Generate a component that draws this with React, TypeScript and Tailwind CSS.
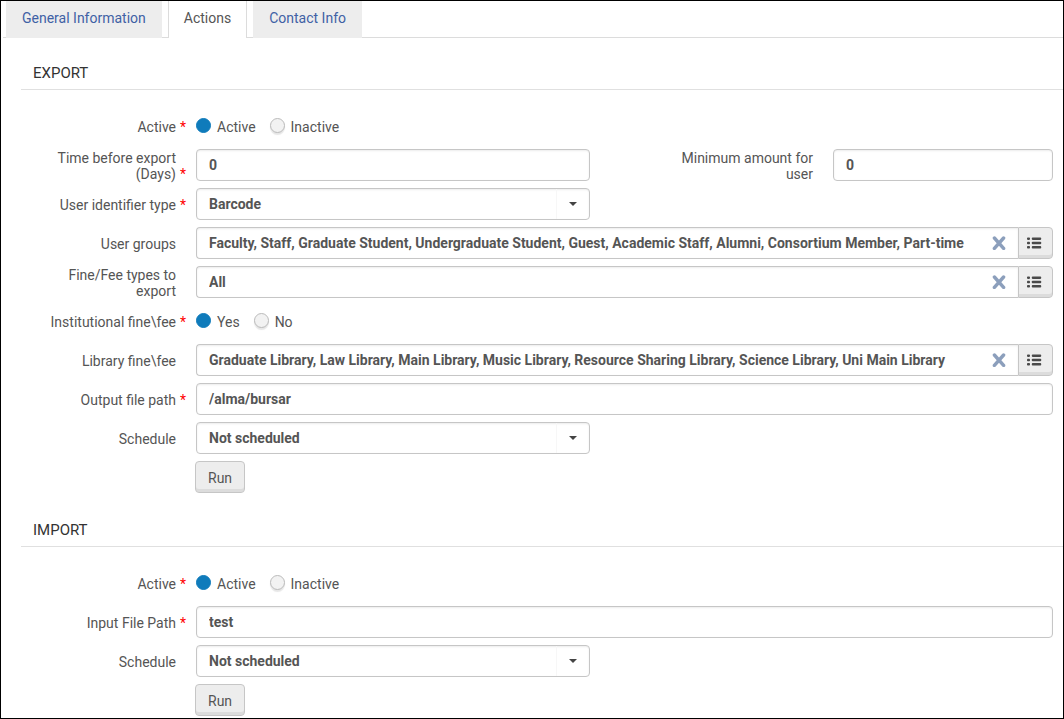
import React, { useState } from 'react';

const fieldClass =
  'block h-8 rounded border border-[#c6c6c6] bg-white px-3 text-sm font-bold text-[#555] shadow-[inset_0_1px_2px_rgba(0,0,0,0.08)] outline-none focus:border-[#0f7bbb]';

const buttonClass =
  'border border-[#c6c6c6] bg-[#ededed] text-sm text-[#555] shadow-[inset_0_-3px_0_#dcdcdc] hover:bg-[#e4e4e4]';

const tabs = ['General Information', 'Actions', 'Contact Info'];

function Label({ text, htmlFor, required }: { text: string; htmlFor?: string; required?: boolean }) {
  return (
    <div className="flex shrink-0 items-end pt-0.5 text-right text-sm leading-4 text-[#555]">
      <label htmlFor={htmlFor} className="w-[132px]">{text}</label>
      <span className="w-5 pl-1 text-left text-[#f00]">{required ? '*' : ''}</span>
    </div>
  );
}

function Row({ children }: { children: React.ReactNode }) {
  return <div className="flex h-8 items-center">{children}</div>;
}

function TextRow({ id, label, value, required }: { id: string; label: string; value: string; required?: boolean }) {
  return (
    <Row>
      <Label text={label} htmlFor={id} required={required} />
      <input id={id} type="text" defaultValue={value} className={`${fieldClass} min-w-0 flex-1`} />
    </Row>
  );
}

function RadioRow({ name, label, options }: { name: string; label: string; options: string[] }) {
  const [selected, setSelected] = useState(options[0]);

  return (
    <div role="radiogroup" aria-label={label}>
      <Row>
        <Label text={label} required />
        <div className="flex gap-3.5">
          {options.map((option) => (
            <label key={option} className="flex items-start gap-1.5 text-sm leading-4 text-[#555]">
              <input
                type="radio"
                name={name}
                checked={selected === option}
                onChange={() => setSelected(option)}
                className="size-[15px] appearance-none rounded-full border border-[#bbb] bg-[#f2f2f2] shadow-[0_2px_1px_rgba(0,0,0,0.1)] checked:border-[#0f7bbb] checked:bg-[#0f7bbb] checked:shadow-none"
              />
              <span className="pt-px">{option}</span>
            </label>
          ))}
        </div>
      </Row>
    </div>
  );
}

function SelectRow({ id, label, options, required }: { id: string; label: string; options: string[]; required?: boolean }) {
  return (
    <Row>
      <Label text={label} htmlFor={id} required={required} />
      <div className="min-w-0 flex-1">
        <div className="relative w-[46%]">
          <select id={id} className={`${fieldClass} w-full appearance-none pr-10`}>
            {options.map((option) => (
              <option key={option}>{option}</option>
            ))}
          </select>
          <div className="pointer-events-none absolute inset-y-px right-px flex w-[33px] items-center justify-center border-l border-[#f7f7f7]">
            <svg width="8" height="4" viewBox="0 0 8 4" fill="#444">
              <path d="M0 0h8L4 4z" />
            </svg>
          </div>
        </div>
      </div>
    </Row>
  );
}

function PickerRow({ id, label, value }: { id: string; label: string; value: string }) {
  const [text, setText] = useState(value);

  return (
    <Row>
      <Label text={label} htmlFor={id} />
      <div className="flex min-w-0 flex-1">
        <div className="relative min-w-0 flex-1">
          <input
            id={id}
            type="text"
            value={text}
            onChange={(e) => setText(e.target.value)}
            className={`${fieldClass} w-full rounded-r-none border-r-0 pr-10`}
          />
          <button
            type="button"
            aria-label={`Clear ${label}`}
            onClick={() => setText('')}
            className="absolute inset-y-px right-[7px] flex w-6 items-center justify-center"
          >
            <svg width="14" height="14" viewBox="0 0 14 14" fill="none" stroke="#8c9fbc" strokeWidth="3.4" strokeLinecap="round">
              <path d="M2.4 2l9.2 10.4M11.6 2L2.4 12.4" />
            </svg>
          </button>
        </div>
        <button
          type="button"
          aria-label={`Choose ${label}`}
          className={`${buttonClass} flex h-8 w-[35px] items-center justify-center rounded-r pr-0.5`}
        >
          <svg width="15" height="12" viewBox="0 0 15 12" fill="#4a4a4a">
            <rect y="0.5" width="3" height="2.4" rx="0.8" />
            <rect y="4.8" width="3" height="2.4" rx="0.8" />
            <rect y="9.1" width="3" height="2.4" rx="0.8" />
            <rect x="4.8" y="0.5" width="9.4" height="2.4" rx="0.8" />
            <rect x="4.8" y="4.8" width="9.4" height="2.4" rx="0.8" />
            <rect x="4.8" y="9.1" width="9.4" height="2.4" rx="0.8" />
          </svg>
        </button>
      </div>
    </Row>
  );
}

function RunRow() {
  return (
    <Row>
      <button type="button" className={`${buttonClass} ml-[151px] h-8 rounded px-3 pt-0.5`}>Run</button>
    </Row>
  );
}

function Section({ title, children }: { title: string; children: React.ReactNode }) {
  return (
    <section className="pl-5">
      <h2 className="flex h-[33px] items-center border-b border-[#e0e0e0] pl-3 text-[15px] text-[#333]">{title}</h2>
      <div className="flex flex-col gap-[7px] pt-5 pr-2.5 pl-[23px]">{children}</div>
    </section>
  );
}

export default function App() {
  const [activeTab, setActiveTab] = useState('Actions');

  return (
    <div className="min-h-screen border border-black bg-white pb-0.5 font-['Roboto',sans-serif]">
      {/* Tabs */}
      <div className="ml-0.5 border-b border-[#dcdcdc]">
        <div role="tablist" className="-mb-px flex gap-1.5 pl-[3px]">
          {tabs.map((tab) => (
            <button
              key={tab}
              type="button"
              role="tab"
              aria-selected={tab === activeTab}
              onClick={() => setActiveTab(tab)}
              className={
                tab === activeTab
                  ? 'h-[37px] border-x border-[#dcdcdc] bg-white px-[15px] pb-1 text-sm text-[#555]'
                  : 'h-[37px] bg-[#ededed] px-4 pb-1 text-sm text-[#3f61a5]'
              }
            >
              {tab}
            </button>
          ))}
        </div>
      </div>

      {/* Sections */}
      <form className="flex flex-col gap-[21px] pt-[19px]">
        <Section title="EXPORT">
          <RadioRow name="export-active" label="Active" options={['Active', 'Inactive']} />
          <Row>
            <Label text="Time before export (Days)" htmlFor="export-days" required />
            <div className="flex min-w-0 flex-1 items-center">
              <input id="export-days" type="text" defaultValue="0" className={`${fieldClass} w-[46%]`} />
              <div className="ml-auto flex items-center">
                <Label text="Minimum amount for user" htmlFor="export-minimum" />
                <input id="export-minimum" type="text" defaultValue="0" className={`${fieldClass} w-[220px]`} />
              </div>
            </div>
          </Row>
          <SelectRow id="export-identifier" label="User identifier type" options={['Barcode']} required />
          <PickerRow
            id="export-groups"
            label="User groups"
            value="Faculty, Staff, Graduate Student, Undergraduate Student, Guest, Academic Staff, Alumni, Consortium Member, Part-time"
          />
          <PickerRow id="export-types" label="Fine/Fee types to export" value="All" />
          <RadioRow name="export-institutional" label="Institutional fine\fee" options={['Yes', 'No']} />
          <PickerRow
            id="export-library"
            label="Library fine\fee"
            value="Graduate Library, Law Library, Main Library, Music Library, Resource Sharing Library, Science Library, Uni Main Library"
          />
          <TextRow id="export-path" label="Output file path" value="/alma/bursar" required />
          <SelectRow id="export-schedule" label="Schedule" options={['Not scheduled']} />
          <RunRow />
        </Section>

        <Section title="IMPORT">
          <RadioRow name="import-active" label="Active" options={['Active', 'Inactive']} />
          <TextRow id="import-path" label="Input File Path" value="test" required />
          <SelectRow id="import-schedule" label="Schedule" options={['Not scheduled']} />
          <RunRow />
        </Section>
      </form>
    </div>
  );
}
